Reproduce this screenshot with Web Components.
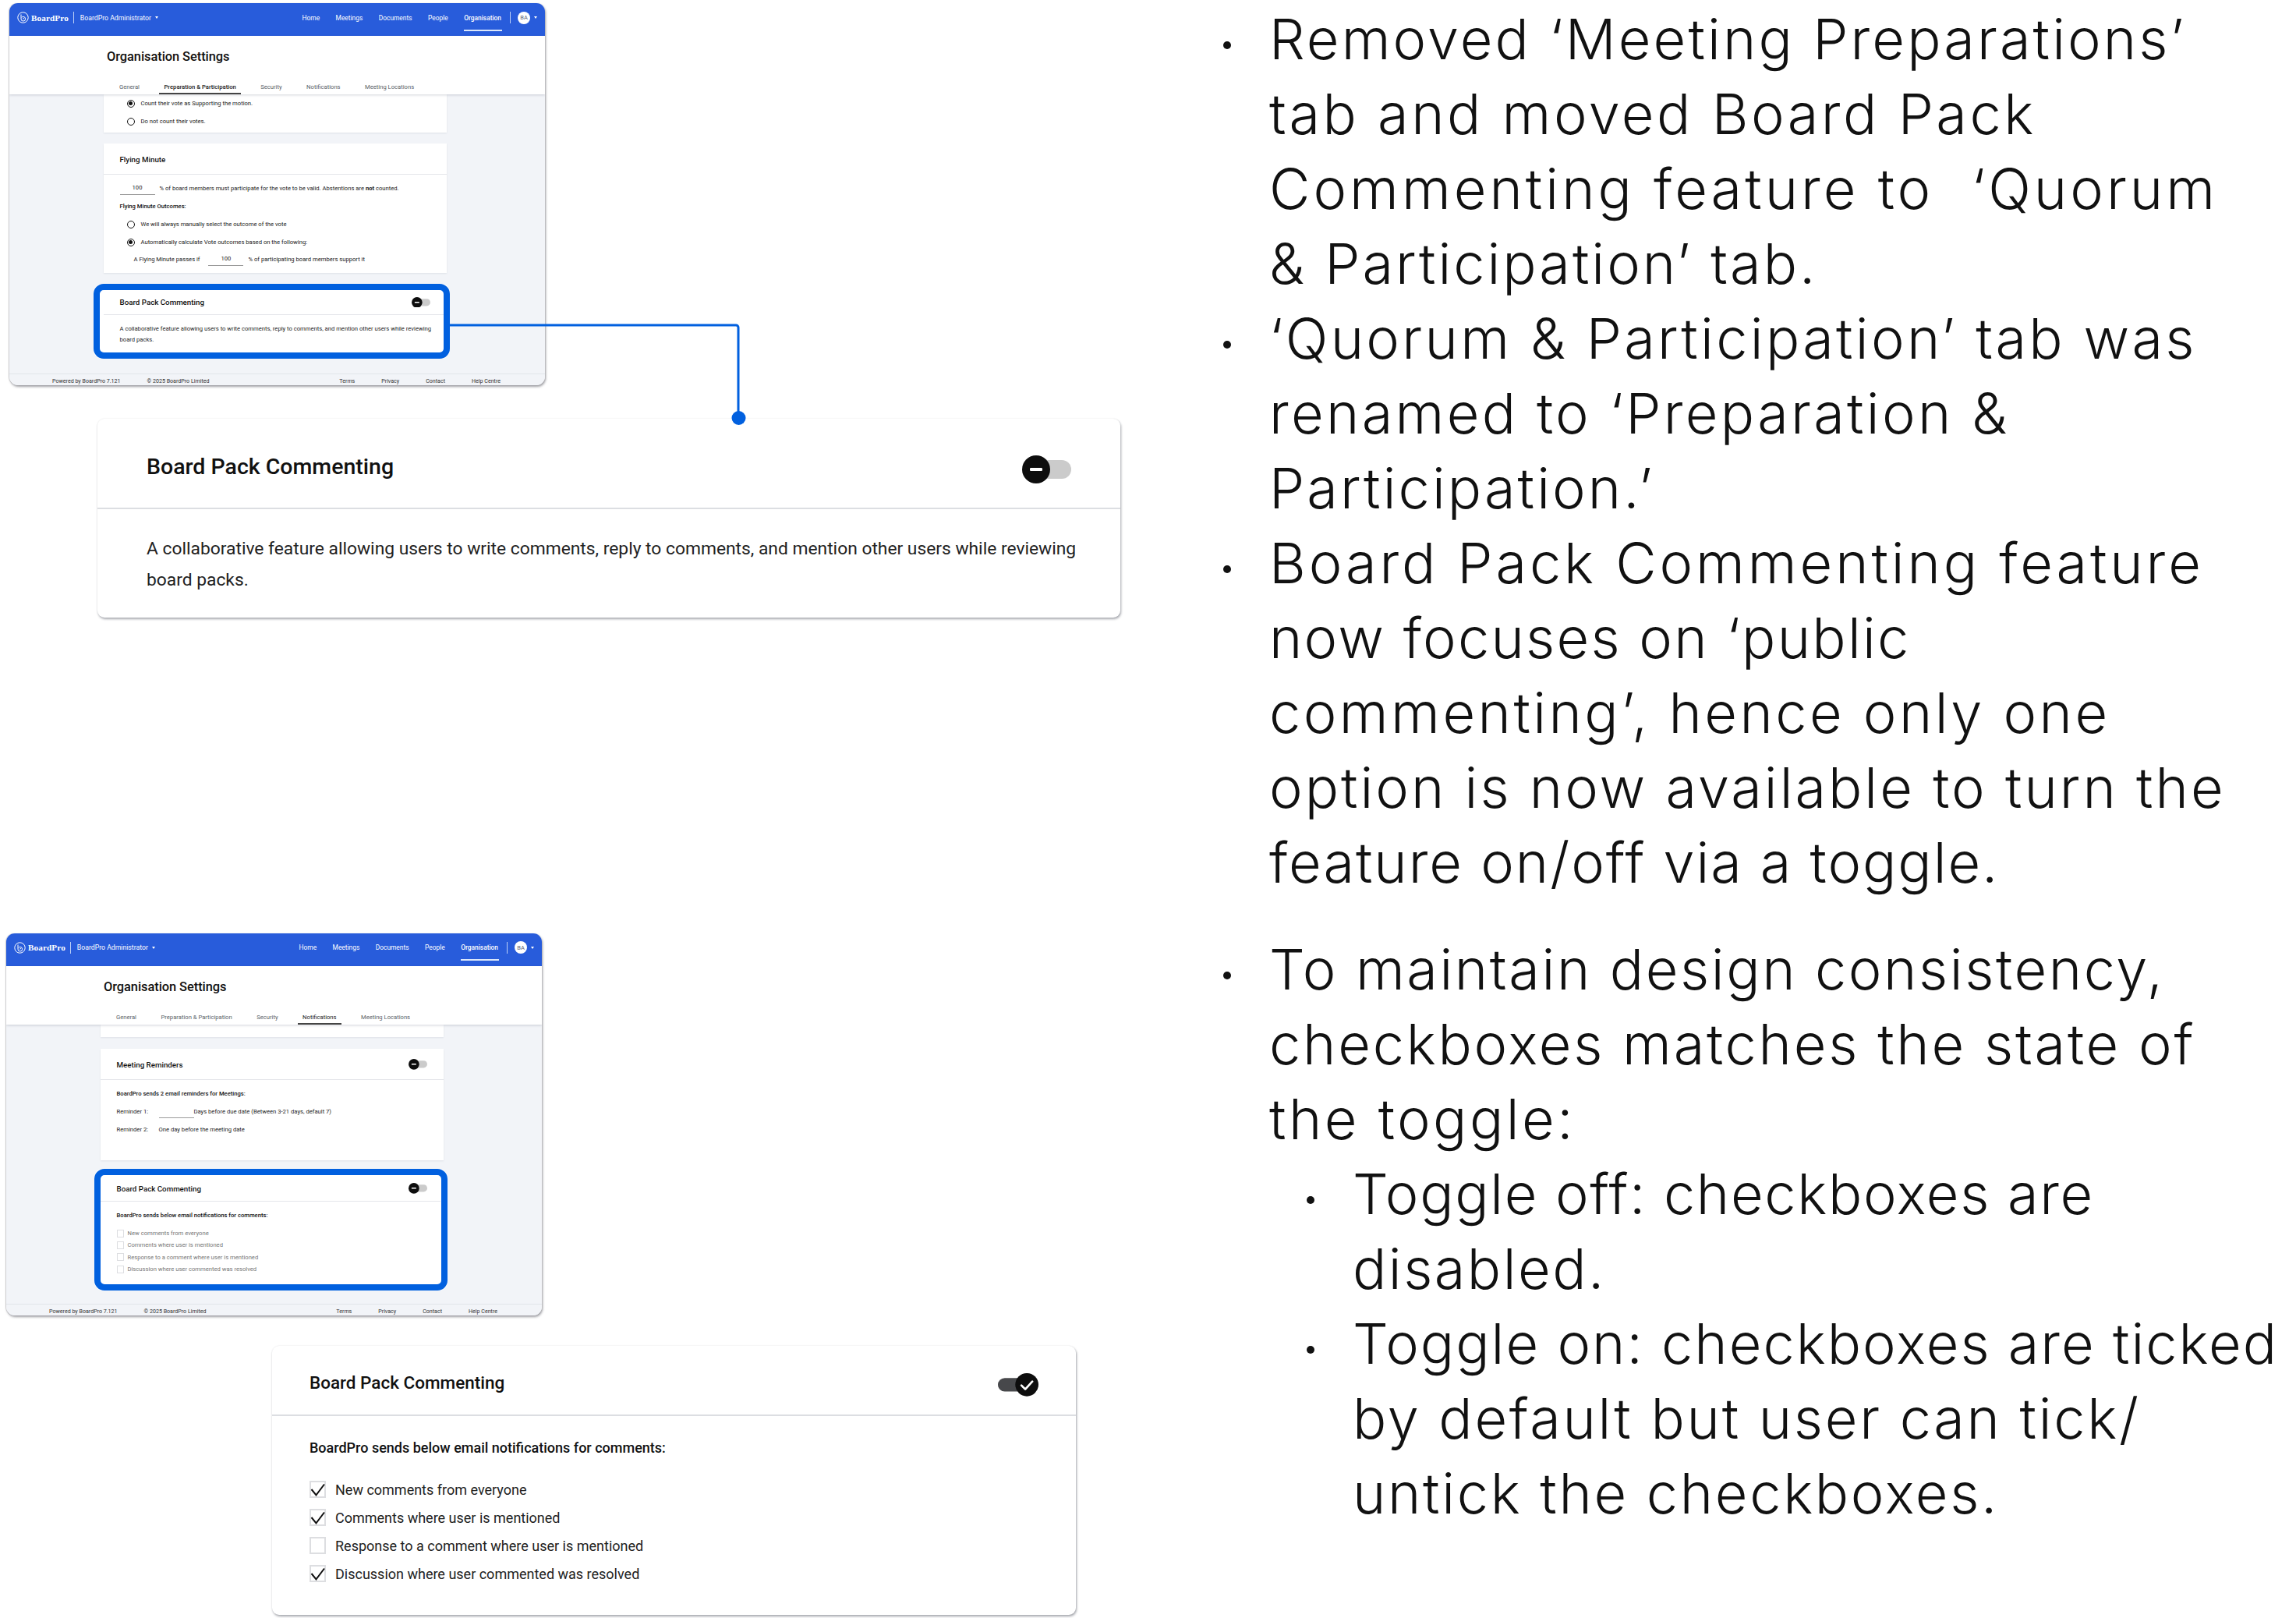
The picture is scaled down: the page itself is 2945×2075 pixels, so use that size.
<!DOCTYPE html>
<html lang="en"><head><meta charset="utf-8"><title>Board Pack Commenting</title>
<style>
html,body{margin:0;background:#fff}
body{font-family:Roboto,"Liberation Sans",sans-serif;color:#111}
app-window.w1{left:12px;top:4px}
app-window.w2{left:8px;top:1196.5px}
set-card.mini{--pad:20.5px;--pad-r:21px;--title-size:9.75px;font-size:7.65px}
set-card.d1{left:125px;top:537px;width:1312px;--pad:63px;--pad-r:63px;--head-h:116px;--head-pt:8px;--title-size:28.5px;--radius:9px;--shadow:1px 2px 3px rgba(40,45,60,.4),0 0 2px rgba(40,45,60,.1);--tog-mt:8px;font-size:22.8px;position:absolute}
set-card.d2{left:349px;top:1726px;width:1031px;--pad:48px;--pad-r:48px;--head-h:90px;--head-pt:6px;--title-size:22.5px;--radius:9px;--shadow:1px 2px 3px rgba(40,45,60,.4),0 0 2px rgba(40,45,60,.1);--tog-mt:6px;font-size:18px;position:absolute}
bullet-list{left:1557px;top:2px}
</style></head><body>
<script>
function def(name, css, html, init){
  customElements.define(name, class extends HTMLElement{
    connectedCallback(){
      if(this.shadowRoot) return;
      const r=this.attachShadow({mode:'open'});
      r.innerHTML='<style>'+css+'</style>'+(typeof html==='function'?html(this):html);
      if(init) init(this,r);
    }
  });
}
def('slide-canvas',':host{display:block;position:relative;width:2945px;height:2075px;overflow:hidden;background:#fff}','<slot></slot>');

def('bp-logo',`:host{display:inline-flex;align-items:center;gap:3px;color:#fff}
 svg{width:15px;height:15px;display:block}
 b{font:700 11.2px "Liberation Serif",serif;letter-spacing:.1px}`,
 `<svg viewBox="0 0 30 30" fill="none" stroke="#fff" stroke-width="2"><circle cx="15" cy="15" r="13.4"/><path d="M10 7v11.5a5.6 5.6 0 1 0 5.6-5.6c-2 0-3.4.9-4.4 2.4"/><path d="M14.5 18.6l3.4-2"/></svg><b>BoardPro</b>`);

def('caret-down',':host{display:inline-block;width:0;height:0;border:2.5px solid transparent;border-top:3px solid #fff;border-bottom:0}','');

def('app-header',`:host{display:flex;align-items:center;height:42px;background:#285cdb;color:#fff;font-size:8.4px;padding:0 10px 5px 10px;box-sizing:border-box;flex:none}
 .sep{width:1px;height:15px;background:#bcd0f6;margin:0 8px 0 6px}
 .admin{font-size:8.7px}
 .caret{margin-left:5px}
 nav{margin-left:auto;display:flex;gap:20.500px;height:100%;align-items:center}
 nav span{position:relative}
 nav .on:after{content:"";position:absolute;left:0;right:-1px;top:20px;height:2px;background:#dbe7fb}
 nav .on{font-weight:500}
 .sep2{width:1px;height:15px;background:#bcd0f6;margin:0 9px 0 11px}
 .av{width:16px;height:16px;border-radius:50%;background:#fff;color:#5b6473;display:flex;align-items:center;justify-content:center;font-size:7.5px}
 .c2{margin-left:5px}`,
 `<bp-logo></bp-logo><i class="sep"></i><span class="admin">BoardPro Administrator</span><caret-down class="caret"></caret-down>
 <nav><span>Home</span><span>Meetings</span><span>Documents</span><span>People</span><span class="on">Organisation</span></nav>
 <i class="sep2"></i><div class="av">BA</div><caret-down class="c2"></caret-down>`);

def('settings-head',`:host{display:block;height:75px;background:#fff;box-shadow:0 1px 3px rgba(60,70,90,.22);position:relative;z-index:1;box-sizing:border-box;padding-left:125px;flex:none}
 h1{margin:0;padding-top:16px;height:46px;box-sizing:border-box;font:500 16.4px/21px Roboto,sans-serif;color:#111;letter-spacing:-.05px}
 .tabs{display:flex;gap:19.5px;height:29px;margin-left:10px;font-size:7.65px;color:#5a5f68}
 .tabs span{padding:12px 6px 0;display:flex;align-items:center;height:100%;box-sizing:border-box;border-bottom:2px solid transparent}
 .tabs .on{border-bottom-color:#444;color:#222;}
 `,
 h=>{const a=h.getAttribute('active');
  return `<h1>Organisation Settings</h1><div class="tabs">`+['General','Preparation & Participation','Security','Notifications','Meeting Locations'].map(t=>`<span class="${t===a?'on':''}" style="${t===a&&a[0]=='P'?'font-weight:500':''}">${t.replace('&','&amp;')}</span>`).join('')+`</div>`});

def('app-footer',`:host{display:flex;align-items:center;height:15px;border-top:1px solid #e2e5ea;font-size:7.1px;color:#333;padding:3px 57px 0 55px;flex:none;box-sizing:border-box;gap:34px;background:#f2f4f8}
 .r{margin-left:auto;display:flex;gap:34px}`,
 `<span>Powered by BoardPro 7.121</span><span>© 2025 BoardPro Limited</span><div class="r"><span>Terms</span><span>Privacy</span><span>Contact</span><span>Help Centre</span></div>`);

def('app-window',`:host{position:absolute;display:flex;flex-direction:column;width:687px;height:490px;border-radius:11px;overflow:hidden;background:#f2f4f8;box-shadow:1px 2px 3px rgba(60,60,70,.5),-.5px 0 1px rgba(60,60,70,.2)}
 main{flex:1;min-height:0;padding-left:121px;display:flex;flex-direction:column;overflow:hidden}`,
 h=>`<app-header></app-header><settings-head active="${h.getAttribute('active')}"></settings-head><main><slot></slot></main><app-footer></app-footer>`);

def('set-card',`:host{display:block;width:440px;position:relative;flex:none;z-index:0}
 .card{background:#fff;border-radius:var(--radius,0);box-shadow:var(--shadow,0 1px 2px rgba(60,70,90,.1))}
 .head{display:flex;align-items:center;justify-content:space-between;box-sizing:border-box;height:var(--head-h,40px);padding:var(--head-pt,0) var(--pad-r) 0 var(--pad);border-bottom:var(--head-b,1px) solid #e4e6ea}
 :host([detail]) .head{border-bottom-width:2px;border-bottom-color:#dcdee2}
 .title{font-weight:500;font-size:var(--title-size);color:#111}
 .body{padding:var(--body-pad,0) var(--pad-r) var(--body-pb,0) var(--pad)}
 :host([plain]) .head{display:none}
 ::slotted(toggle-switch){margin-top:var(--tog-mt,0)}
 :host([highlight]) .card{background:transparent;box-shadow:none}
 :host([highlight]):before{content:"";position:absolute;z-index:-1;background:#fff;border-radius:11px;top:-8px;bottom:-8px;left:var(--ring-l);right:var(--ring-r)}
 :host([highlight]):after{content:"";position:absolute;z-index:1;pointer-events:none;border:8px solid #0160df;border-radius:13px;top:-8px;bottom:-8px;left:var(--ring-l);right:var(--ring-r)}
 :host([highlight]) .head{margin-right:4px;padding-right:calc(var(--pad-r) - 4px)}`,
 `<div class="card"><div class="head"><div class="title"><slot name="title"></slot></div><slot name="toggle"></slot></div><div class="body"><slot></slot></div></div>`);

def('toggle-switch',`:host{display:block;flex:none;width:var(--w,63px);height:calc(var(--w,63px) * 36 / 63)}svg{display:block;width:100%;height:100%}`,
 h=>h.hasAttribute('on')
 ?`<svg viewBox="0 0 63 36"><rect x="0" y="7.5" width="48" height="21" rx="10.5" fill="#47484b"/><circle cx="45" cy="18" r="18" fill="#0d0d0d"/><path d="M36.5 19l6 6 11-12" fill="none" stroke="#fff" stroke-width="3.2" stroke-linecap="round" stroke-linejoin="round"/></svg>`
 :`<svg viewBox="0 0 63 36"><rect x="15" y="6" width="48" height="24" rx="12" fill="#cbcbcb"/><circle cx="18" cy="18" r="18" fill="#0d0d0d"/><rect x="10" y="16" width="16" height="4" rx="1.2" fill="#fff"/></svg>`);

def('text-row',`:host{display:flex;align-items:center;height:var(--row,23px);white-space:nowrap;color:#222;padding-left:var(--indent,0)}
 :host([strong]){font-weight:500;color:#111}`,'<slot></slot>');

def('num-field',`:host{display:inline-block;box-sizing:border-box;text-align:center;color:#222;border-bottom:1px solid #9a9a9a;height:15px;line-height:11px;margin:0 var(--after,6px) 0 var(--before,0);width:45px;flex:none;align-self:center;position:relative;top:1px}`,'<slot></slot>');

def('radio-row',`:host{display:flex;align-items:center;height:23px;padding-left:9px;gap:8px;white-space:nowrap;color:#222}
 i{width:10px;height:10px;box-sizing:border-box;border:1.2px solid #111;border-radius:50%;display:flex;align-items:center;justify-content:center}
 :host([checked]) i:after{content:"";width:5px;height:5px;background:#111;border-radius:50%}`,'<i></i><span><slot></slot></span>');

def('check-row',`:host{display:flex;align-items:center;height:var(--row);gap:var(--gap);white-space:nowrap;color:var(--col,#222)}
 .b{width:var(--box);height:calc(var(--box) + 1px);box-sizing:border-box;border:var(--bw,2px) solid #dddee1;flex:none;position:relative}
 svg{position:absolute;left:calc(var(--bw,2px) * -1);top:calc(var(--bw,2px) * -1);width:var(--box);height:calc(var(--box) + 1px);overflow:visible}`,
 h=>`<div class="b">${h.hasAttribute('checked')?'<svg viewBox="0 0 21 22" fill="none" stroke="#111" stroke-width="2"><path d="M2.5 11l6 7.4L19 4.5"/></svg>':''}</div><span><slot></slot></span>`);

def('conn-line',`:host{position:absolute;left:0;top:0;width:1000px;height:560px;z-index:2;pointer-events:none}svg{display:block}`,
 `<svg width="1000" height="560" viewBox="0 0 1000 560" fill="none"><path d="M577 417H944a3 3 0 0 1 3 3V536" stroke="#0160df" stroke-width="3"/><circle cx="947.500" cy="536" r="9" fill="#0160df"/></svg>`);

def('bullet-list',`:host{position:absolute;display:block;font-family:Inter,"Open Sans",sans-serif;font-weight:300;font-size:72px;letter-spacing:3.1px;line-height:96px;color:#111;white-space:nowrap}`,'<slot></slot>');
def('bullet-item',`:host{display:flex;position:relative;margin-left:var(--lvl,0)}
 .d{width:71px;flex:none;position:relative}
 .d:after{content:"";position:absolute;left:12px;top:51px;width:10px;height:10px;border-radius:50%;background:#111}`,
 `<div class="d"></div><div><slot></slot></div>`);
</script>

<slide-canvas>
  <app-window class="w1" active="Preparation &amp; Participation">
    <set-card class="mini" plain style="--body-pb:3px">
      <radio-row checked>Count their vote as Supporting the motion.</radio-row>
      <radio-row>Do not count their votes.</radio-row>
    </set-card>
    <set-card class="mini" style="margin-top:14px;--head-h:40px;--head-pt:2px;--body-pad:6px;--body-pb:8px">
      <span slot="title">Flying Minute</span>
      <text-row><num-field>100</num-field><span>% of board members must participate for the vote to be valid. Abstentions are <b>not</b> counted.</span></text-row>
      <text-row strong>Flying Minute Outcomes:</text-row>
      <radio-row>We will always manually select the outcome of the vote</radio-row>
      <radio-row checked>Automatically calculate Vote outcomes based on the following:</radio-row>
      <text-row style="--row:20px;--indent:18px"><span>A Flying Minute passes if</span><num-field style="--before:11px">100</num-field><span>% of participating board members support it</span></text-row>
    </set-card>
    <set-card class="mini" highlight style="margin-top:22px;--head-h:32px;--body-pad:10px;--body-pb:10px;--ring-l:-13px;--ring-r:-4px;--row:14px">
      <span slot="title">Board Pack Commenting</span>
      <toggle-switch slot="toggle" style="--w:24px"></toggle-switch>
      <text-row>A collaborative feature allowing users to write comments, reply to comments, and mention other users while reviewing</text-row>
      <text-row>board packs.</text-row>
    </set-card>
  </app-window>

  <conn-line></conn-line>

  <set-card class="d1" detail style="--body-pad:30px;--body-pb:29px;--row:40px">
    <span slot="title">Board Pack Commenting</span>
    <toggle-switch slot="toggle"></toggle-switch>
    <text-row>A collaborative feature allowing users to write comments, reply to comments, and mention other users while reviewing</text-row>
    <text-row>board packs.</text-row>
  </set-card>

  <app-window class="w2" active="Notifications">
    <set-card class="mini" plain style="--body-pb:16px"></set-card>
    <set-card class="mini" style="margin-top:15px;--head-h:40px;--head-pt:2px;--body-pad:6px;--body-pb:28px">
      <span slot="title">Meeting Reminders</span>
      <toggle-switch slot="toggle" style="--w:24px"></toggle-switch>
      <text-row strong>BoardPro sends 2 email reminders for Meetings:</text-row>
      <text-row><span style="width:54px">Reminder 1:</span><num-field style="--after:0px"></num-field><span>Days before due date (Between 3-21 days, default 7)</span></text-row>
      <text-row><span style="width:54px">Reminder 2:</span><span>One day before the meeting date</span></text-row>
    </set-card>
    <set-card class="mini" highlight style="margin-top:19px;--head-h:34px;--head-pt:2px;--body-pad:7px;--body-pb:11.5px;--ring-l:-8px;--ring-r:-5px;--row:22px">
      <span slot="title">Board Pack Commenting</span>
      <toggle-switch slot="toggle" style="--w:24px"></toggle-switch>
      <text-row strong>BoardPro sends below email notifications for comments:</text-row>
      <div style="margin-top:4.5px;--row:15.33px;--box:9px;--gap:5px;--bw:1px;--col:#777">
        <check-row>New comments from everyone</check-row>
        <check-row>Comments where user is mentioned</check-row>
        <check-row>Response to a comment where user is mentioned</check-row>
        <check-row>Discussion where user commented was resolved</check-row>
      </div>
    </set-card>
  </app-window>

  <set-card class="d2" detail style="--body-pad:22px;--body-pb:35px;--row:36px">
    <span slot="title">Board Pack Commenting</span>
    <toggle-switch slot="toggle" on style="--w:52px"></toggle-switch>
    <text-row strong>BoardPro sends below email notifications for comments:</text-row>
    <div style="margin-top:18px;--box:21px;--gap:12px;--row:36px;--col:#222">
      <check-row checked>New comments from everyone</check-row>
      <check-row checked>Comments where user is mentioned</check-row>
      <check-row>Response to a comment where user is mentioned</check-row>
      <check-row checked>Discussion where user commented was resolved</check-row>
    </div>
  </set-card>

  <bullet-list>
    <bullet-item>Removed ‘Meeting Preparations’<br><span style="letter-spacing:3.5px">tab and moved Board Pack</span><br><span style="letter-spacing:4px">Commenting feature to &nbsp;‘Quorum</span><br><span style="letter-spacing:3px">&amp; Participation’ tab.</span></bullet-item>
    <bullet-item><span style="letter-spacing:3.3px">‘Quorum &amp; Participation’ tab was</span><br><span style="letter-spacing:3.3px">renamed to ‘Preparation &amp;</span><br>Participation.’</bullet-item>
    <bullet-item><span style="letter-spacing:3.9px">Board Pack Commenting feature</span><br><span style="letter-spacing:2.25px">now focuses on ‘public</span><br><span style="letter-spacing:3.45px">commenting’, hence only one</span><br><span style="letter-spacing:3px">option is now available to turn the</span><br><span style="letter-spacing:1.95px">feature on/off via a toggle.</span></bullet-item>
    <bullet-item style="margin-top:41px"><span style="letter-spacing:2.6px">To maintain design consistency,</span><br><span style="letter-spacing:2.75px">checkboxes matches the state of</span><br><span style="letter-spacing:3.45px">the toggle:</span></bullet-item>
    <bullet-item style="--lvl:107px"><span style="letter-spacing:1.65px">Toggle off: checkboxes are</span><br><span style="letter-spacing:2.5px">disabled.</span></bullet-item>
    <bullet-item style="--lvl:107px"><span style="letter-spacing:2px">Toggle on: checkboxes are ticked</span><br><span style="letter-spacing:2.7px">by default but user can tick/</span><br><span style="letter-spacing:2.67px">untick the checkboxes.</span></bullet-item>
  </bullet-list>
</slide-canvas>
</body></html>
